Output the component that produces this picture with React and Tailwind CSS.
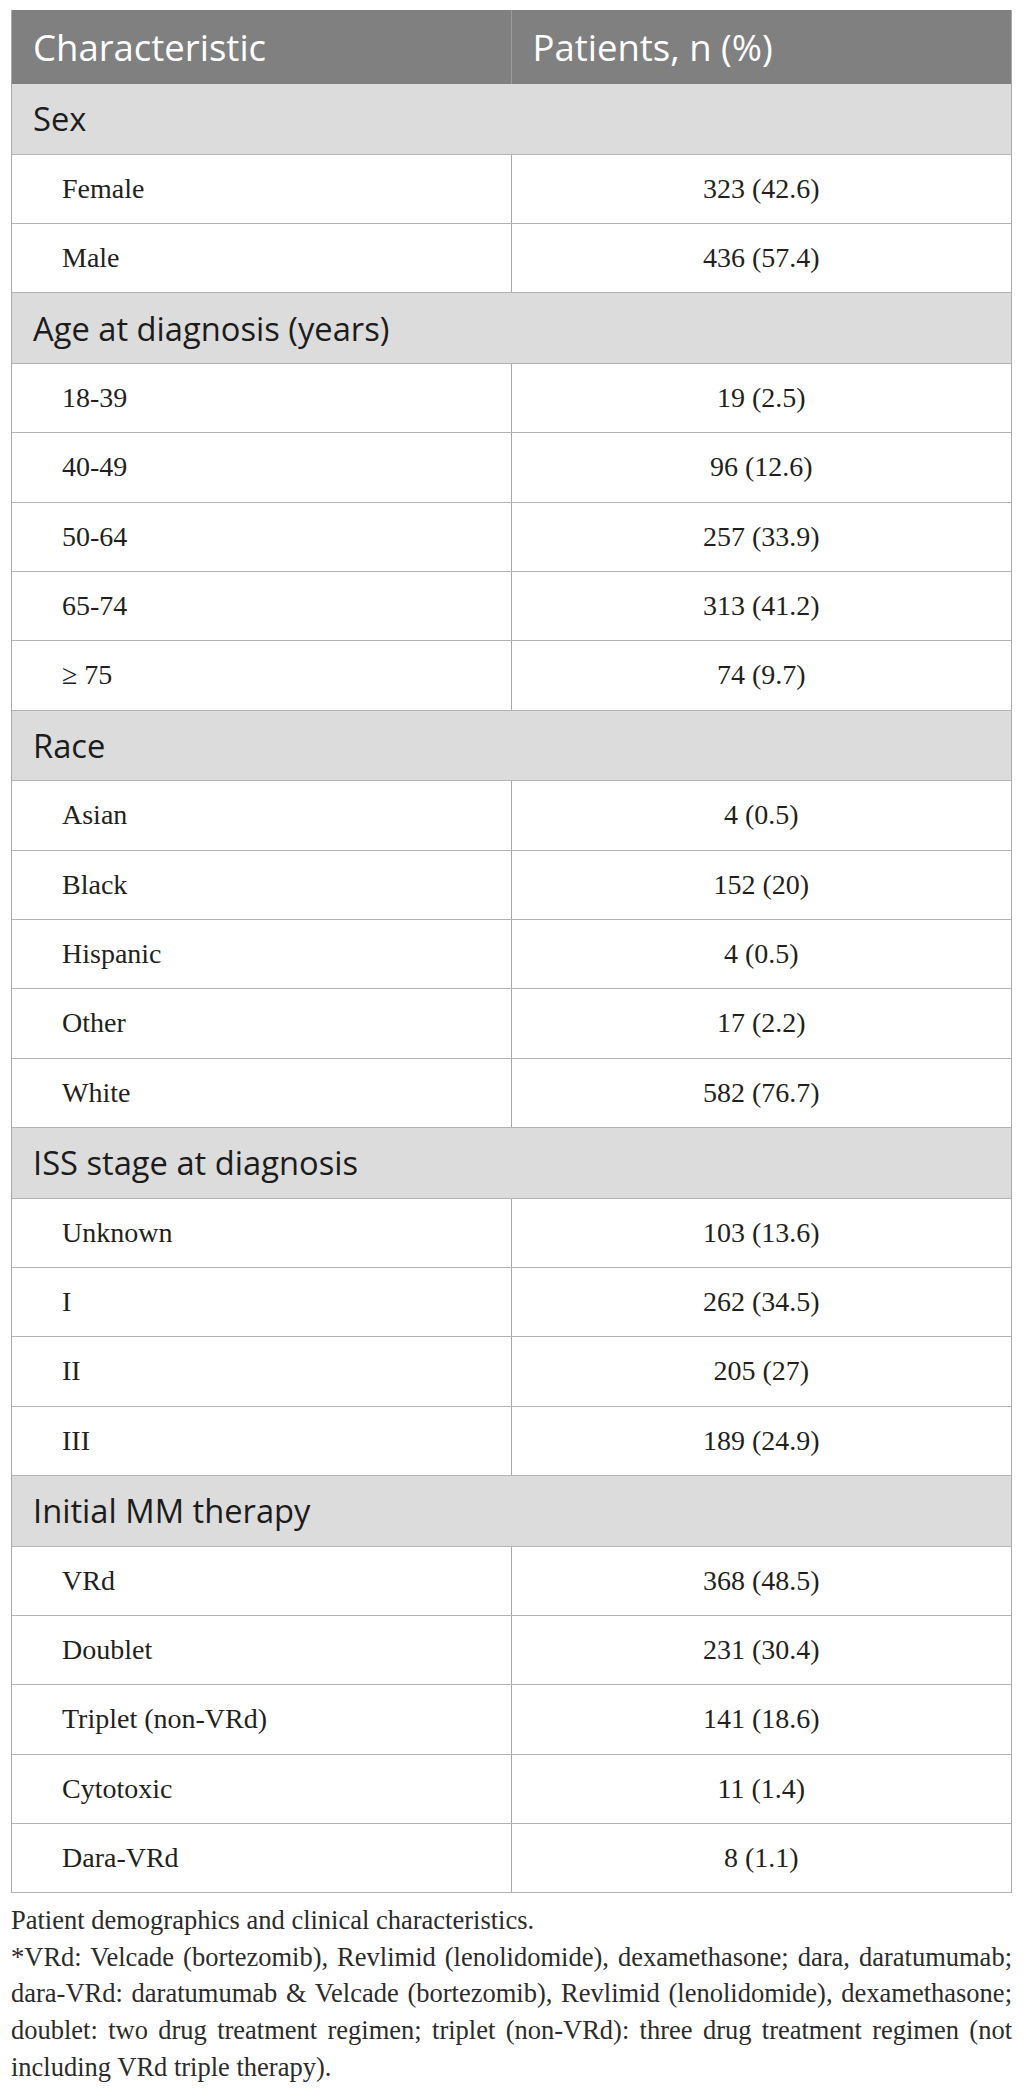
// Tabela de características dos pacientes

const sections = [
    {
        title: 'Sex',
        rows: [
            ['Female', '323 (42.6)'],
            ['Male', '436 (57.4)'],
        ],
    },
    {
        title: 'Age at diagnosis (years)',
        rows: [
            ['18-39', '19 (2.5)'],
            ['40-49', '96 (12.6)'],
            ['50-64', '257 (33.9)'],
            ['65-74', '313 (41.2)'],
            ['≥ 75', '74 (9.7)'],
        ],
    },
    {
        title: 'Race',
        rows: [
            ['Asian', '4 (0.5)'],
            ['Black', '152 (20)'],
            ['Hispanic', '4 (0.5)'],
            ['Other', '17 (2.2)'],
            ['White', '582 (76.7)'],
        ],
    },
    {
        title: 'ISS stage at diagnosis',
        rows: [
            ['Unknown', '103 (13.6)'],
            ['I', '262 (34.5)'],
            ['II', '205 (27)'],
            ['III', '189 (24.9)'],
        ],
    },
    {
        title: 'Initial MM therapy',
        rows: [
            ['VRd', '368 (48.5)'],
            ['Doublet', '231 (30.4)'],
            ['Triplet (non-VRd)', '141 (18.6)'],
            ['Cytotoxic', '11 (1.4)'],
            ['Dara-VRd', '8 (1.1)'],
        ],
    },
];

const App = () => {
    return (
        <div className="min-h-screen bg-white pt-[10px] pl-[11px]">
            <div className="w-[1001px]">
                {/* Table */}
                <div className="border-x border-[#a9a9a9]">
                    {/* Header */}
                    <div className="flex h-[74px] bg-[#808080] font-['Open_Sans',sans-serif] text-[36.5px] text-white">
                        <div className="flex w-1/2 items-center border-r border-[#9c9c9c] pl-[21px]">
                            Characteristic
                        </div>
                        <div className="flex flex-1 items-center pl-[21px]">
                            Patients, n (%)
                        </div>
                    </div>

                    {sections.map((section) => (
                        <div key={section.title}>
                            <div className="flex h-[70.67px] items-center border-b border-[#b4b4b4] bg-[#dcdcdc] pl-[21px] font-['Open_Sans',sans-serif] text-[32.7px] text-[#1c1c1c]">
                                {section.title}
                            </div>
                            {section.rows.map(([label, value]) => (
                                <div
                                    key={label}
                                    className="flex h-[69.33px] border-b border-[#b4b4b4] font-['Liberation_Serif',serif] text-[28px] text-[#231f20]"
                                >
                                    <div className="flex w-1/2 items-center border-r border-[#a9a9a9] pl-[50px]">
                                        {label}
                                    </div>
                                    <div className="flex flex-1 items-center justify-center">
                                        {value}
                                    </div>
                                </div>
                            ))}
                        </div>
                    ))}
                </div>

                {/* Footnote */}
                <div className="mt-[8.5px] font-['Liberation_Serif',serif] text-[26.5px] leading-[36.9px] text-[#2b2b2b]">
                    <p>Patient demographics and clinical characteristics.</p>
                    <p className="text-justify">
                        *VRd: Velcade (bortezomib), Revlimid (lenolidomide),
                        dexamethasone; dara, daratumumab; dara-VRd: daratumumab
                        &amp; Velcade (bortezomib), Revlimid (lenolidomide),
                        dexamethasone; doublet: two drug treatment regimen;
                        triplet (non-VRd): three drug treatment regimen (not
                        including VRd triple therapy).
                    </p>
                </div>
            </div>
        </div>
    );
};

export default App;
